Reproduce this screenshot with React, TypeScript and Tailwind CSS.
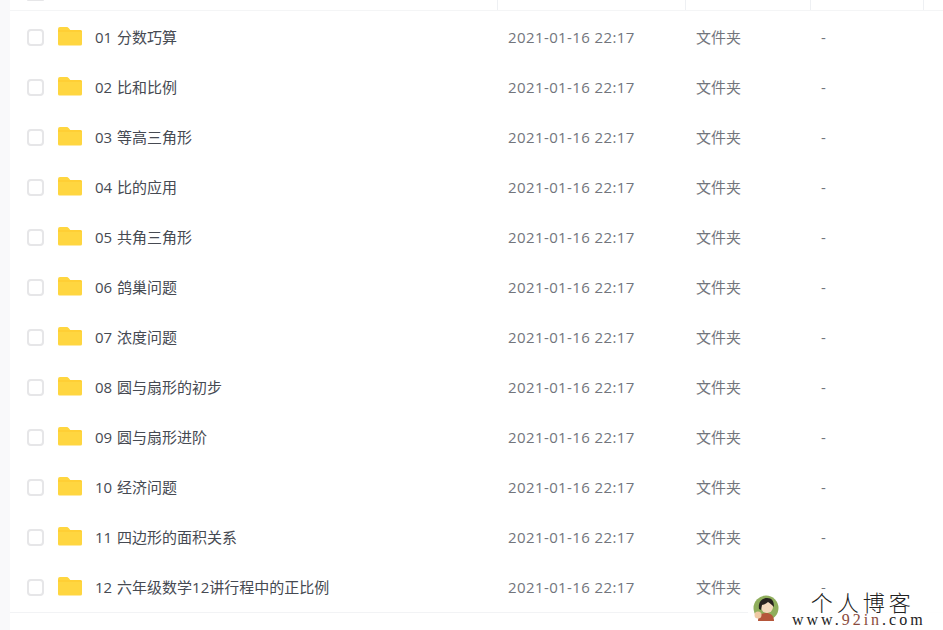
const rows = [
  "01 分数巧算",
  "02 比和比例",
  "03 等高三角形",
  "04 比的应用",
  "05 共角三角形",
  "06 鸽巢问题",
  "07 浓度问题",
  "08 圆与扇形的初步",
  "09 圆与扇形进阶",
  "10 经济问题",
  "11 四边形的面积关系",
  "12 六年级数学12讲行程中的正比例",
];

const font = { fontFamily: '"Open Sans","Noto Sans CJK SC",sans-serif' };

function Folder() {
  return (
    <svg width="26" height="20" viewBox="0 0 26 20" className="block shrink-0">
      <path d="M1 3a2 2 0 0 1 2-2h6.5c1 0 1.6.4 2.2 1.1L13.2 4H23a2 2 0 0 1 2 2v12a1.5 1.5 0 0 1-1.5 1.5h-21A1.5 1.5 0 0 1 1 18z" fill="#ffd640" />
      <path d="M1 6h24a2 2 0 0 0-2-2H12.5L1 4z" fill="#ffcf35" />
    </svg>
  );
}

export default function App() {
  return (
    <div className="relative flex h-[630px] w-[943px] overflow-hidden bg-white" style={font}>
      <div className="w-[10px] shrink-0 bg-[#f9f9fa]" />
      <div className="flex min-w-0 flex-1 flex-col">
        <div className="flex h-[11px] shrink-0 border-b border-[#f4f5f6]">
          <div className="w-[488px] border-r border-[#eef0f3]">
            <div className="ml-[17px] h-[1px] w-[17px] rounded-b-[2px] bg-[#e6e6e8]" />
          </div>
          <div className="w-[188px] border-r border-[#eef0f3]" />
          <div className="w-[125px] border-r border-[#eef0f3]" />
          <div className="w-[113px] border-r border-[#eef0f3]" />
        </div>
        <div className="flex flex-col border-b border-[#f2f3f5] pt-[1px]">
          {rows.map((name) => (
            <div key={name} className="flex h-[50px] items-center text-[15px]">
              <div className="flex w-[488px] items-center">
                <span className="ml-[17px] h-[17px] w-[17px] shrink-0 rounded-[4px] border-2 border-[#e6e6e8] bg-white" />
                <span className="ml-[13px] mb-[2px]"><Folder /></span>
                <span className="ml-[12px] text-[#464a52] [word-spacing:1px]">{name}</span>
              </div>
              <div className="w-[188px] pl-[10px] tracking-[0.4px] text-[#72757c]">2021-01-16 22:17</div>
              <div className="w-[125px] pl-[10px] text-[#72757c]">文件夹</div>
              <div className="pl-[10px] text-[#72757c]">-</div>
            </div>
          ))}
        </div>
      </div>
      <div className="absolute left-[748px] top-[589px] flex h-[38px] w-[195px] items-center bg-white/90">
        <svg width="26" height="28" viewBox="0 0 26 28" className="ml-[5px] shrink-0">
          <circle cx="13" cy="14" r="12.5" fill="#8fae5c" />
          <path d="M5 27c0-6 4-8 8-8s8 2 8 8z" fill="#b5563a" />
          <circle cx="14" cy="13" r="6" fill="#f4d9bd" />
          <path d="M6 15c-1-7 3-11 8-11s7 3 7 9c-2-2-4-4-6-5-2 2-5 3-6 3l-1 5z" fill="#27221f" />
          <circle cx="5" cy="21" r="3.5" fill="#efc9a4" />
        </svg>
        <div className="ml-[13px] flex flex-col items-center leading-none">
          <span className="ml-[4px] mr-[-4px] text-[22px] leading-[22px] tracking-[4px] text-[#222]" style={{ fontFamily: '"Noto Sans CJK SC",sans-serif', fontWeight: 300 }}>个人博客</span>
          <span className="mt-[1px] text-[16px] leading-[13px] text-[#222]" style={{ fontFamily: '"Liberation Serif",serif', letterSpacing: "3px" }}>
            www.<span className="text-[#8a4a3c]">92in</span>.com
          </span>
        </div>
      </div>
    </div>
  );
}
